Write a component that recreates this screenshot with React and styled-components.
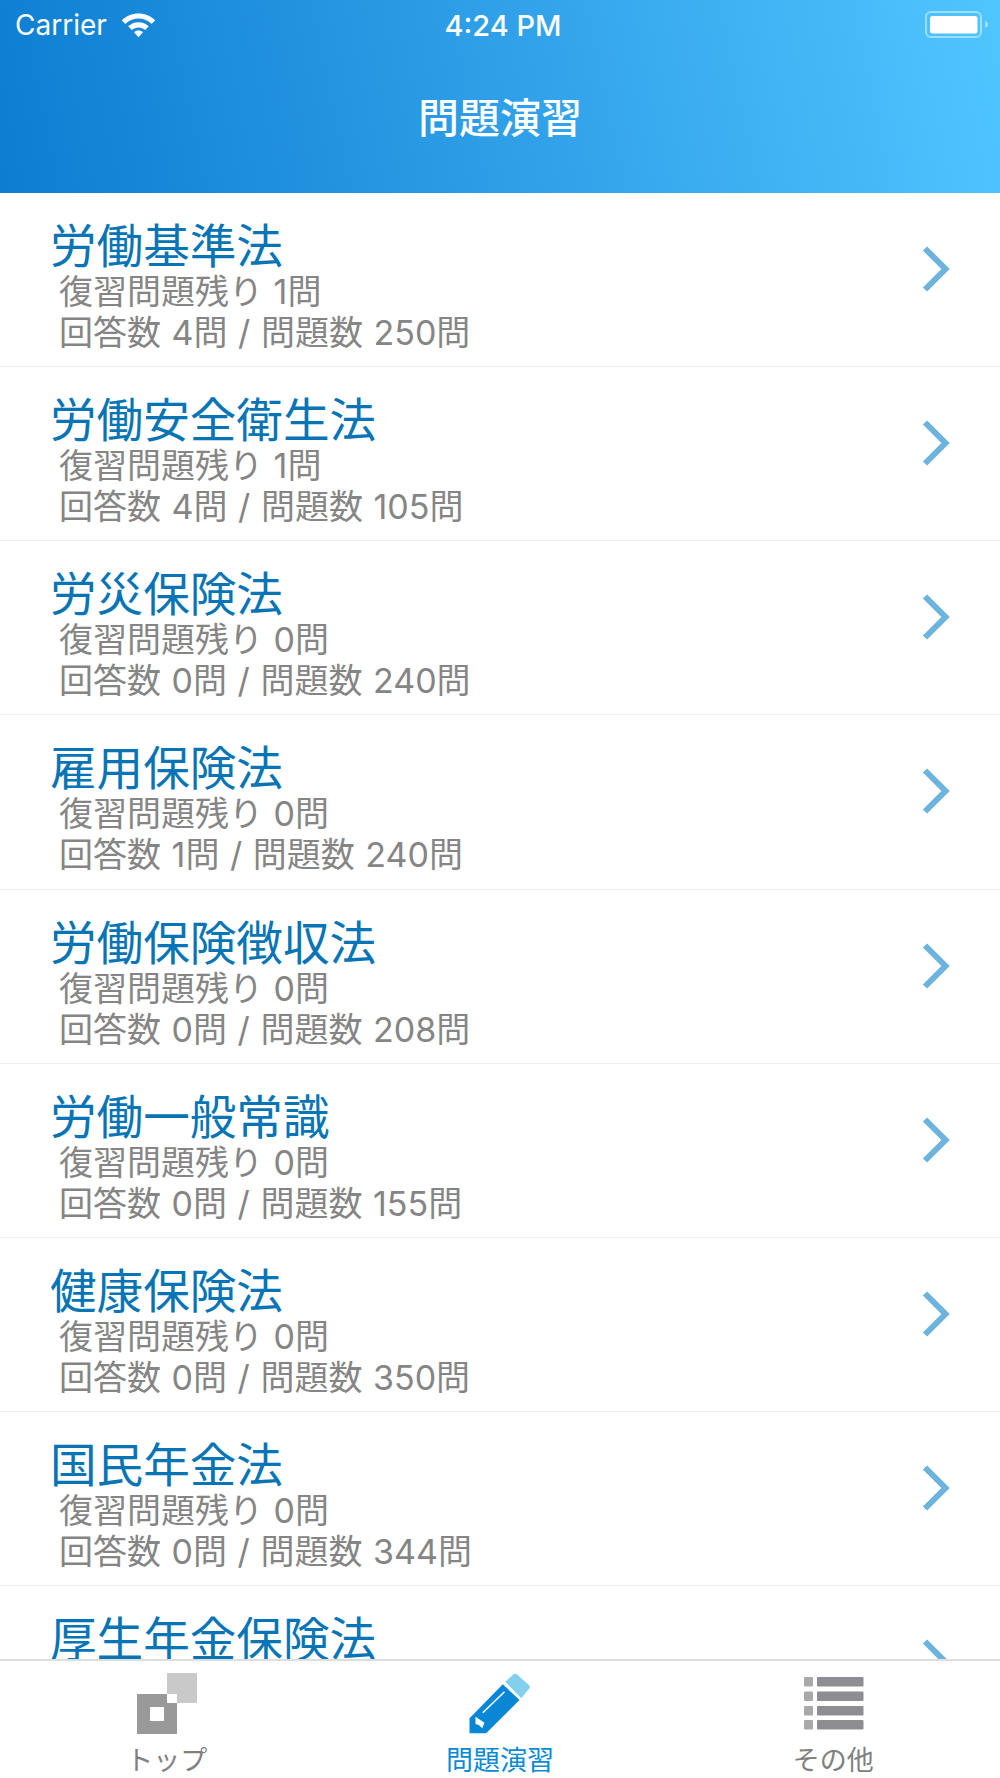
import React from "react";
import styled, { createGlobalStyle } from "styled-components";

const Global = createGlobalStyle`
  html, body { margin: 0; padding: 0; background: #fff; }
  body { font-family: Inter, "Noto Sans CJK JP", sans-serif; }
`;

const Screen = styled.div`
  width: 1000px;
  height: 1778px;
  display: flex;
  flex-direction: column;
  overflow: hidden;
  background: #fff;
`;

const Header = styled.header`
  height: 193px;
  flex: none;
  display: flex;
  flex-direction: column;
  background: linear-gradient(78deg, #0c7dd1 0%, #2f9fe8 50%, #50c6ff 100%);
  color: #fff;
`;

const StatusBar = styled.div`
  height: 50px;
  padding: 0 12px 0 15px;
  display: grid;
  grid-template-columns: 1fr auto 1fr;
  align-items: center;
  font-size: 28px;
`;

const Carrier = styled.div`
  display: flex;
  align-items: center;
  gap: 14px;
`;

const Time = styled.div`
  padding-left: 3px;
  font-size: 29px;
  font-weight: 500;
`;

const Battery = styled.svg`
  justify-self: end;
  display: block;
`;

const Title = styled.h1`
  margin: 0;
  padding-top: 41px;
  text-align: center;
  font-size: 41px;
  line-height: 54px;
  font-weight: 500;
`;

const List = styled.main`
  flex: 1;
  min-height: 0;
  overflow: hidden;
`;

const Row = styled.div`
  height: 174.15px;
  box-sizing: border-box;
  padding: 29px 50px 0 50px;
  display: flex;
  align-items: flex-start;
  border-bottom: 1px solid #efefef;
`;

const RowText = styled.div`
  flex: 1;
  min-width: 0;
`;

const RowTitle = styled.div`
  font-size: 46.6px;
  line-height: 49px;
  color: #0775b5;
`;

const RowSub = styled.div`
  margin-left: 9px;
  font-size: 34px;
  line-height: 41px;
  word-spacing: 1px;
  color: #858585;
`;

const Chevron = styled.svg`
  flex: none;
  display: block;
  margin-top: 24px;
`;

const TabBar = styled.nav`
  height: 119px;
  flex: none;
  box-sizing: border-box;
  border-top: 2px solid #dedede;
  display: grid;
  grid-template-columns: repeat(3, 1fr);
  background: #fff;
`;

const Tab = styled.div`
  display: flex;
  flex-direction: column;
  align-items: center;
  padding-top: 12px;
`;

const TabIcon = styled.svg`
  display: block;
`;

const TabLabel = styled.div`
  margin-top: 10px;
  font-size: 27px;
  line-height: 34px;
  color: ${(p) => (p.$active ? "#0a8ad6" : "#808080")};
`;

const rows = [
  { name: "労働基準法", review: 1, answered: 4, total: 250 },
  { name: "労働安全衛生法", review: 1, answered: 4, total: 105 },
  { name: "労災保険法", review: 0, answered: 0, total: 240 },
  { name: "雇用保険法", review: 0, answered: 1, total: 240 },
  { name: "労働保険徴収法", review: 0, answered: 0, total: 208 },
  { name: "労働一般常識", review: 0, answered: 0, total: 155 },
  { name: "健康保険法", review: 0, answered: 0, total: 350 },
  { name: "国民年金法", review: 0, answered: 0, total: 344 },
  { name: "厚生年金保険法" },
];

export default function App() {
  return (
    <Screen>
      <Global />
      <Header>
        <StatusBar>
          <Carrier>
            Carrier
            <svg width="35" height="25" viewBox="0 0 35 25">
              <path d="M17.5 0.5C11 0.5 5.2 3 0.8 7.2l3.6 3.8C8 7.6 12.5 5.6 17.5 5.6s9.5 2 13.1 5.4l3.6-3.8C29.8 3 24 .5 17.5.5z" fill="#fff" />
              <path d="M17.5 9.2c-4 0-7.6 1.6-10.3 4.1l3.6 3.8c1.8-1.6 4.2-2.7 6.7-2.7s4.9 1.1 6.7 2.7l3.6-3.8c-2.7-2.5-6.3-4.1-10.3-4.1z" fill="#fff" />
              <path d="M17.5 17.6c-1.8 0-3.4.7-4.500 1.700l4.500 4.900 4.500-4.900c-1.100-1-2.700-1.700-4.500-1.700z" fill="#fff" />
            </svg>
          </Carrier>
          <Time>4:24 PM</Time>
          <Battery width="63" height="28" viewBox="0 0 63 28">
            <rect x="1" y="1" width="55" height="25" rx="5" fill="none" stroke="#fff" strokeOpacity="0.45" strokeWidth="2" />
            <rect x="5" y="5" width="47.5" height="17.5" rx="2.5" fill="#fff" />
            <path d="M60 10c1.8.6 3 1.8 3 3.5s-1.200 2.900-3 3.500z" fill="#fff" fillOpacity="0.45" />
          </Battery>
        </StatusBar>
        <Title>問題演習</Title>
      </Header>
      <List>
        {rows.map(({ name, review, answered, total }) => (
          <Row key={name}>
            <RowText>
              <RowTitle>{name}</RowTitle>
              {total !== undefined && (
                <>
                  <RowSub>復習問題残り {review}問</RowSub>
                  <RowSub>回答数 {answered}問 / 問題数 {total}問</RowSub>
                </>
              )}
            </RowText>
            <Chevron width="28" height="46" viewBox="0 0 28 46">
              <path d="M3 2.500L23.500 23 3 43.500" fill="none" stroke="#6cb3dd" strokeWidth="6" />
            </Chevron>
          </Row>
        ))}
      </List>
      <TabBar>
        <Tab>
          <TabIcon width="61" height="61" viewBox="-1 0 61 61">
            <rect x="30" y="0" width="30" height="30" fill="#c9c9c9" />
            <rect x="0" y="21" width="40" height="40" fill="#999" />
            <rect x="13" y="34" width="14" height="14" fill="#fff" />
            <rect x="30" y="21" width="10" height="9" fill="#fff" />
          </TabIcon>
          <TabLabel>トップ</TabLabel>
        </Tab>
        <Tab>
          <TabIcon width="61" height="61" viewBox="-0.5 0 61 61">
            <path d="M33.300 11.300L50 27 16.700 60.300H0V45.300z" fill="#0a87d4" />
            <path d="M35.700 8.700L44 1.300c1-.9 2.400-.9 3.300 0l12.300 10.900c1 1 1 2.400.1 3.400l-7.900 9.700z" fill="#82cfee" />
            <path d="M6 43.700L15 49.700 12.700 55.300 9.300 52 6 51z" fill="#fff" />
            <path d="M13.300 39.700L35 18.700" stroke="#fff" strokeWidth="1.500" fill="none" />
          </TabIcon>
          <TabLabel $active>問題演習</TabLabel>
        </Tab>
        <Tab>
          <TabIcon width="61" height="61" viewBox="0 0 61 61">
            {[4, 18.5, 33, 47].map((y) => (
              <g key={y}>
                <rect x="1" y={y} width="9" height="9.500" rx="1" fill="#a9a9a9" />
                <rect x="14" y={y} width="46.500" height="9.500" rx="1" fill="#8e8d92" />
              </g>
            ))}
          </TabIcon>
          <TabLabel>その他</TabLabel>
        </Tab>
      </TabBar>
    </Screen>
  );
}
